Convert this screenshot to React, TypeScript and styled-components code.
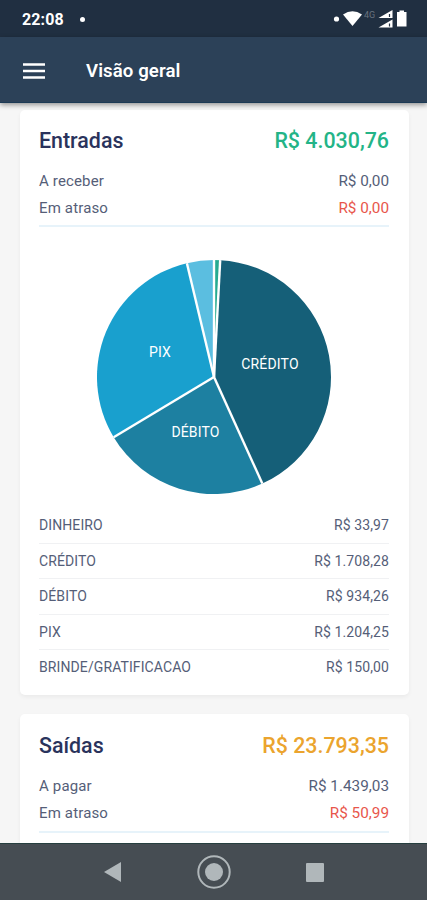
import React from "react";
import styled, { createGlobalStyle } from "styled-components";

const GlobalStyle = createGlobalStyle`
  * { box-sizing: border-box; }
  html, body { margin: 0; padding: 0; }
  body { font-family: Roboto, "Liberation Sans", sans-serif; background: #f6f6f6; }
`;

const Screen = styled.div`
  display: flex;
  flex-direction: column;
  width: 427px;
  height: 900px;
  overflow: hidden;
  background: #f6f6f6;
  color: #555e78;
`;

const StatusBar = styled.header`
  display: flex;
  flex: 0 0 37px;
  align-items: center;
  justify-content: space-between;
  padding: 1px 20px 0 22px;
  background: #202f41;
  color: #fff;
`;

const Clock = styled.div`
  display: flex;
  align-items: center;
  gap: 16px;
  font-size: 16px;
  font-weight: 700;
  letter-spacing: 0.1px;
`;

const Dot = styled.span`
  width: 5px;
  height: 5px;
  border-radius: 50%;
  background: #fff;
`;

const AppBar = styled.div`
  display: flex;
  flex: 0 0 66px;
  align-items: center;
  gap: 41px;
  padding: 2px 0 0 23px;
  background: #2c4158;
  border-bottom: 1px solid #1c3a55;
  box-shadow: 0 2px 5px rgba(0, 0, 0, 0.4);
  z-index: 1;
`;

const MenuButton = styled.button`
  display: grid;
  padding: 0;
  border: 0;
  background: none;
`;

const Title = styled.h1`
  margin: 0;
  color: #fff;
  font-size: 18.6px;
  font-weight: 600;
  letter-spacing: 0.1px;
`;

const Content = styled.main`
  display: flex;
  flex: 1;
  flex-direction: column;
  gap: 18.5px;
  min-height: 0;
  padding: 7px 18px 0 20px;
  overflow: hidden;
`;

const Card = styled.section`
  flex: none;
  padding: 17px 20px 9.5px 19px;
  border-radius: 5px;
  background: #fff;
  box-shadow: 0 2px 4px rgba(0, 0, 0, 0.05);

  &:last-child { padding: 18px 20px 40px 19px; }
`;

const CardHead = styled.div`
  display: flex;
  align-items: center;
  justify-content: space-between;
  height: 27px;
  margin-bottom: 13px;

  ${Card}:last-child & { margin-bottom: 14px; }
`;

const CardTitle = styled.h2`
  margin: 0;
  color: #2a335c;
  font-size: 21.4px;
  font-weight: 500;
`;

const Total = styled.span<{ $color: string }>`
  color: ${(p) => p.$color};
  font-size: 21.4px;
  font-weight: 500;
  letter-spacing: 0;
`;

const SummaryRow = styled.div`
  display: flex;
  align-items: center;
  justify-content: space-between;
  height: 27px;
  font-size: 15px;
  letter-spacing: 0.15px;
`;

const Amount = styled.span<{ $late?: boolean }>`
  color: ${(p) => (p.$late ? "#e8564b" : "inherit")};
  font-size: 15.3px;
  letter-spacing: 0;
`;

const Divider = styled.div`
  height: 2px;
  margin-top: 4px;
  background: #e7f3fa;
`;

const ChartArea = styled.div`
  display: flex;
  justify-content: center;
  height: 281px;
  padding-top: 32px;
`;

const SliceLabel = styled.text`
  fill: #fff;
  font-size: 14px;
  font-weight: 400;
  letter-spacing: 0.15px;
  text-anchor: middle;
`;

const MethodRow = styled.div`
  display: flex;
  align-items: center;
  justify-content: space-between;
  height: 35.5px;
  font-size: 14px;
  letter-spacing: 0.1px;
  border-bottom: 1px solid #f0f1f3;

  &:last-child { height: 34.5px; margin-bottom: 1px; border-bottom: 0; }
`;

const NavBar = styled.nav`
  display: grid;
  flex: 0 0 57px;
  grid-template-columns: repeat(3, 101px);
  align-items: center;
  justify-content: center;
  justify-items: center;
  border-top: 1px solid #263f3f;
  background: #464d53;
  z-index: 1;
`;

const NavButton = styled.button`
  display: grid;
  padding: 0;
  border: 0;
  background: none;
`;

const methods = [
  { name: "DINHEIRO", value: 33.97, text: "R$ 33,97", color: "#27ab91" },
  { name: "CRÉDITO", value: 1708.28, text: "R$ 1.708,28", color: "#155f78", label: [174, 110] },
  { name: "DÉBITO", value: 934.26, text: "R$ 934,26", color: "#1d80a1", label: [99.5, 177.5] },
  { name: "PIX", value: 1204.25, text: "R$ 1.204,25", color: "#19a0ce", label: [64, 98] },
  { name: "BRINDE/GRATIFICACAO", value: 150, text: "R$ 150,00", color: "#5bbee0" },
];

function PieChart() {
  const c = 118;
  const r = 117;
  const sum = methods.reduce((s, m) => s + m.value, 0);
  let acc = 0;
  const slices = methods.map((m) => {
    const a0 = (acc / sum) * Math.PI * 2;
    acc += m.value;
    const a1 = (acc / sum) * Math.PI * 2;
    const point = (a: number) => `${c + r * Math.sin(a)} ${c - r * Math.cos(a)}`;
    return {
      ...m,
      d: `M${c} ${c}L${point(a0)}A${r} ${r} 0 ${a1 - a0 > Math.PI ? 1 : 0} 1 ${point(a1)}Z`,
      edge: `M${c} ${c}L${point(a0)}`,
    };
  });
  return (
    <svg width="236" height="236" viewBox="0 0 236 236">
      {slices.map((s) => <path key={s.name} d={s.d} fill={s.color} />)}
      {slices.map((s) => <path key={s.name} d={s.edge} stroke="#fff" strokeWidth="2.4" />)}
      {slices.map((s) => s.label && (
        <SliceLabel key={s.name} x={s.label[0]} y={s.label[1]}>{s.name}</SliceLabel>
      ))}
    </svg>
  );
}

function StatusIcons() {
  return (
    <svg width="76" height="20" viewBox="0 0 76 20">
      <circle cx="5.500" cy="10" r="2.600" fill="#fff" />
      <path d="M12 5.500Q21.500 -1 31 5.500L21.500 17Z" fill="#fff" />
      <text x="33" y="8.500" fontSize="9" fill="#69737f">4G</text>
      <path d="M61.500 1V9H47.500ZM61.500 10.500V18.500H47.500Z" fill="#fff" />
      <path d="M58.500 5V8M58.500 14.500V17.500" stroke="#202f41" strokeWidth="1.200" />
      <path d="M66 3H68.500V1.500H73V3H75.500V17.500H66Z" fill="#fff" />
    </svg>
  );
}

type SummaryProps = {
  title: string;
  total: string;
  color: string;
  pending: string;
  pendingValue: string;
  lateValue: string;
  children?: React.ReactNode;
};

function SummaryCard(p: SummaryProps) {
  return (
    <Card>
      <CardHead>
        <CardTitle>{p.title}</CardTitle>
        <Total $color={p.color}>{p.total}</Total>
      </CardHead>
      <SummaryRow><span>{p.pending}</span><Amount>{p.pendingValue}</Amount></SummaryRow>
      <SummaryRow><span>Em atraso</span><Amount $late>{p.lateValue}</Amount></SummaryRow>
      <Divider />
      {p.children}
    </Card>
  );
}

export default function App() {
  return (
    <Screen>
      <GlobalStyle />
      <StatusBar>
        <Clock><span>22:08</span><Dot /></Clock>
        <StatusIcons />
      </StatusBar>
      <AppBar>
        <MenuButton aria-label="Menu">
          <svg width="22" height="16" viewBox="0 0 22 16">
            <path d="M0 1.500H22M0 8H22M0 14.500H22" stroke="#fff" strokeWidth="2.400" />
          </svg>
        </MenuButton>
        <Title>Visão geral</Title>
      </AppBar>
      <Content>
        <SummaryCard title="Entradas" total="R$ 4.030,76" color="#23b487" pending="A receber" pendingValue="R$ 0,00" lateValue="R$ 0,00">
          <ChartArea><PieChart /></ChartArea>
          <div>
            {methods.map((m) => (
              <MethodRow key={m.name}><span>{m.name}</span><span>{m.text}</span></MethodRow>
            ))}
          </div>
        </SummaryCard>
        <SummaryCard title="Saídas" total="R$ 23.793,35" color="#eba42e" pending="A pagar" pendingValue="R$ 1.439,03" lateValue="R$ 50,99" />
      </Content>
      <NavBar>
        <NavButton aria-label="Voltar">
          <svg width="17" height="20" viewBox="0 0 17 20"><path d="M0 10L17 0V20Z" fill="#b0b7ba" /></svg>
        </NavButton>
        <NavButton aria-label="Início">
          <svg width="34" height="34" viewBox="0 0 34 34">
            <circle cx="17" cy="17" r="15.700" fill="none" stroke="#b0b7ba" strokeWidth="2" />
            <circle cx="17" cy="17" r="9" fill="#b0b7ba" />
          </svg>
        </NavButton>
        <NavButton aria-label="Recentes">
          <svg width="18" height="19" viewBox="0 0 18 19"><rect width="18" height="19" rx="1" fill="#b0b7ba" /></svg>
        </NavButton>
      </NavBar>
    </Screen>
  );
}
